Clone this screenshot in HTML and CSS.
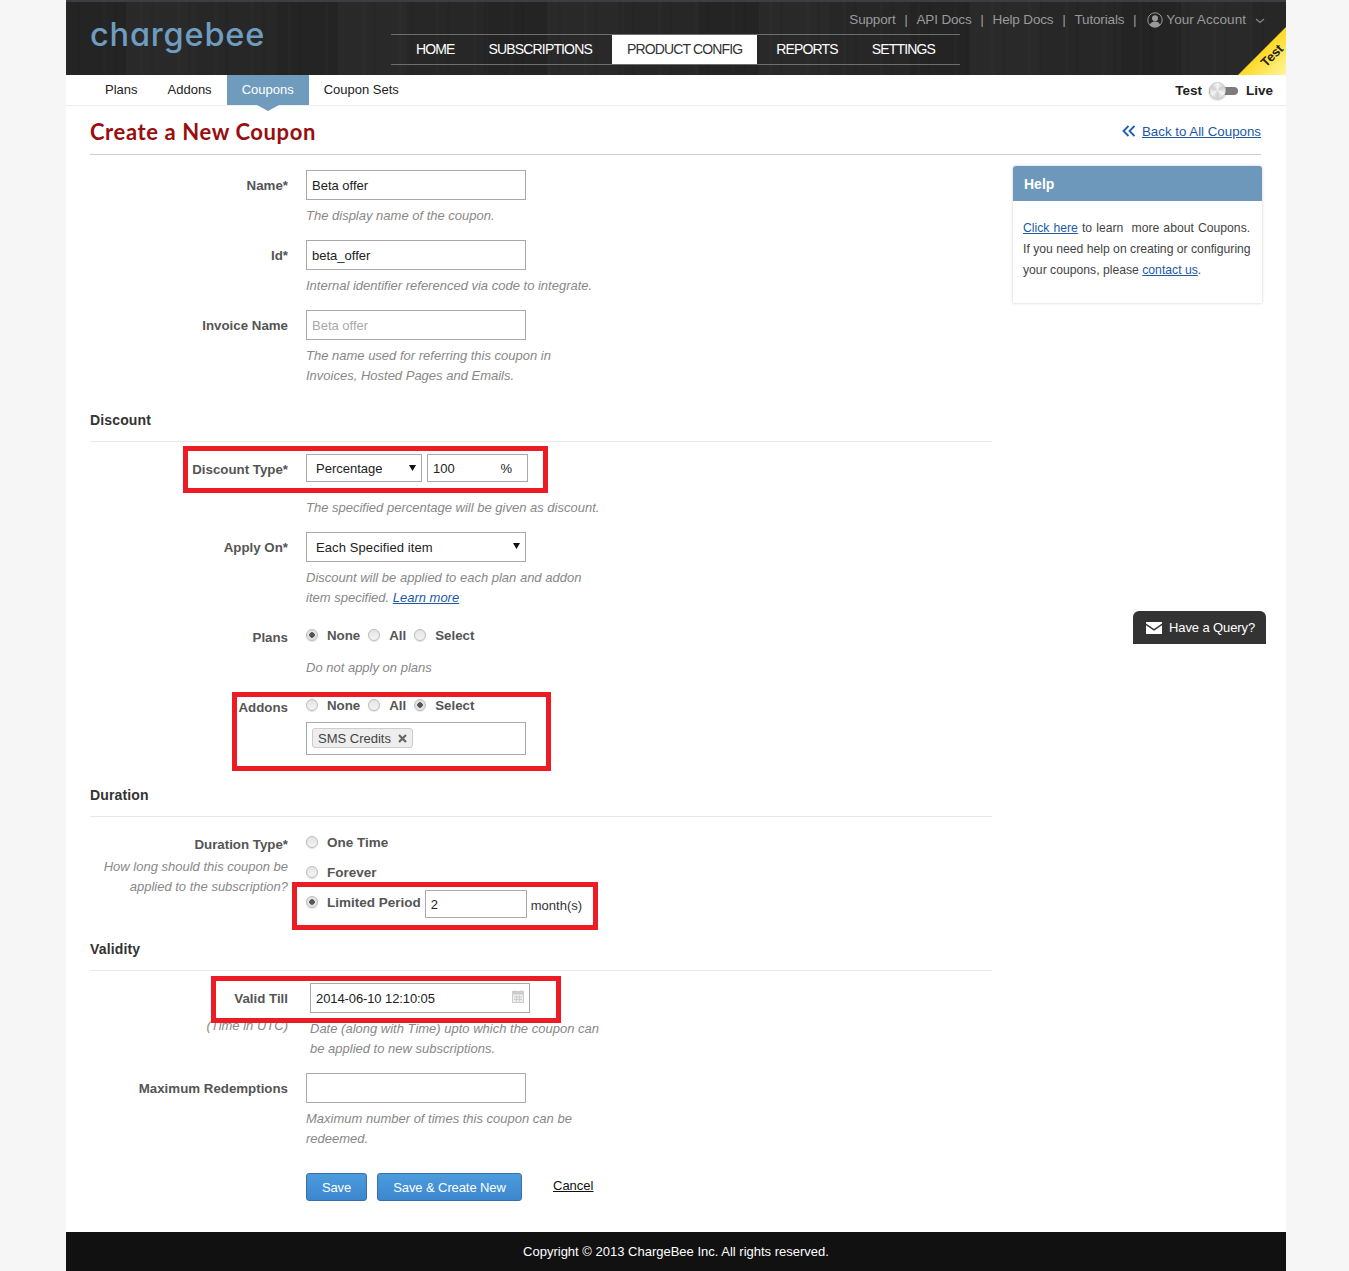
FILE: index.html
```html
<!DOCTYPE html>
<html lang="en">
<head>
<meta charset="utf-8">
<title>Create a New Coupon</title>
<link rel="stylesheet" href="styles.css">
</head>
<body>
<div class="page">
  <header class="header">
    <a class="logo">chargebee</a>
    <div class="header-right">
      <div class="utility">
        <a>Support</a><i>|</i><a>API Docs</a><i>|</i><a>Help Docs</a><i>|</i><a>Tutorials</a><i>|</i>
        <svg class="avatar" viewBox="0 0 16 16" width="16" height="16"><circle cx="8" cy="8" r="7.2" fill="none" stroke="#999" stroke-width="1"/><circle cx="8" cy="6.2" r="3" fill="#999"/><path d="M2.8 13c.8-2.6 2.8-3.6 5.2-3.6s4.400 1 5.200 3.600a7 7 0 0 1-10.400 0z" fill="#999"/></svg>
        <a class="account">Your Account</a>
        <svg class="chev" viewBox="0 0 10 6" width="10" height="6"><path d="M1 1l4 3.500L9 1" fill="none" stroke="#888" stroke-width="1.200"/></svg>
      </div>
      <nav class="nav">
        <a>HOME</a><a class="nav-subs">SUBSCRIPTIONS</a><a class="active">PRODUCT CONFIG</a><a>REPORTS</a><a>SETTINGS</a>
      </nav>
    </div>
    <div class="ribbon"><span>Test</span></div>
  </header>

  <div class="subnav">
    <div class="subnav-tabs">
      <a>Plans</a><a>Addons</a><a class="active">Coupons</a><a>Coupon Sets</a>
    </div>
    <div class="mode">
      <b>Test</b>
      <span class="toggle"><span class="knob"></span></span>
      <b>Live</b>
    </div>
  </div>

  <div class="title-row">
    <h1>Create a New Coupon</h1>
    <div class="back">
      <svg viewBox="0 0 14 12" width="14" height="12"><path d="M6.500 1L1.500 6l5 5M12.500 1l-5 5 5 5" fill="none" stroke="#1d5fa8" stroke-width="1.800"/></svg>
      <a>Back to All Coupons</a>
    </div>
  </div>

  <div class="content">
    <form class="form">
      <div class="row">
        <label class="label">Name*</label>
        <div class="field"><input class="input" type="text" value="Beta offer"><p class="hint">The display name of the coupon.</p></div>
      </div>
      <div class="row">
        <label class="label">Id*</label>
        <div class="field"><input class="input" type="text" value="beta_offer"><p class="hint">Internal identifier referenced via code to integrate.</p></div>
      </div>
      <div class="row">
        <label class="label">Invoice Name</label>
        <div class="field"><input class="input" type="text" placeholder="Beta offer"><p class="hint">The name used for referring this coupon in<br>Invoices, Hosted Pages and Emails.</p></div>
      </div>

      <h2 class="section section-first">Discount</h2>
      <div class="row">
        <label class="label">Discount Type*</label>
        <div class="field">
          <div class="inline">
            <div class="select select-short">Percentage<svg class="arrow" viewBox="0 0 7 7" width="7" height="7"><path d="M0 1h7L3.500 7z" fill="#111"/></svg></div>
            <div class="percent"><span>100</span><span>%</span></div>
          </div>
          <p class="hint">The specified percentage will be given as discount.</p>
        </div>
      </div>
      <div class="row">
        <label class="label">Apply On*</label>
        <div class="field">
          <div class="select">Each Specified item<svg class="arrow" viewBox="0 0 7 7" width="7" height="7"><path d="M0 1h7L3.500 7z" fill="#111"/></svg></div>
          <p class="hint">Discount will be applied to each plan and addon<br>item specified. <a class="link">Learn more</a></p>
        </div>
      </div>
      <div class="row row-radio row-plans">
        <label class="label">Plans</label>
        <div class="field">
          <div class="radios">
            <input type="radio" class="radio" name="plans" checked><span>None</span>
            <input type="radio" class="radio" name="plans"><span>All</span>
            <input type="radio" class="radio" name="plans"><span>Select</span>
          </div>
          <p class="hint hint-gap">Do not apply on plans</p>
        </div>
      </div>
      <div class="row row-radio">
        <label class="label">Addons</label>
        <div class="field">
          <div class="radios">
            <input type="radio" class="radio" name="addons"><span>None</span>
            <input type="radio" class="radio" name="addons"><span>All</span>
            <input type="radio" class="radio" name="addons" checked><span>Select</span>
          </div>
          <div class="tagbox"><span class="tag">SMS Credits<svg class="tag-x" viewBox="0 0 9 9" width="9" height="9"><path d="M1 1l7 7M8 1L1 8" stroke="#666" stroke-width="2.200" fill="none"/></svg></span></div>
        </div>
      </div>

      <h2 class="section section-duration">Duration</h2>
      <div class="row row-duration">
        <div class="label-stack">
          <label class="label">Duration Type*</label>
          <p class="hint hint-right">How long should this coupon be<br>applied to the subscription?</p>
        </div>
        <div class="field">
          <div class="choice"><input type="radio" class="radio" name="dur"><span>One Time</span></div>
          <div class="choice"><input type="radio" class="radio" name="dur"><span>Forever</span></div>
          <div class="choice"><input type="radio" class="radio" name="dur" checked><span>Limited Period</span><input class="input input-months" type="text" value="2"><em>month(s)</em></div>
        </div>
      </div>

      <h2 class="section section-validity">Validity</h2>
      <div class="row row-valid">
        <div>
          <label class="label">Valid Till</label>
          <p class="hint hint-right hint-utc">(Time in UTC)</p>
        </div>
        <div class="field field-valid">
          <div class="date">2014-06-10 12:10:05
            <svg class="cal" viewBox="0 0 12 13" width="12" height="13"><rect x=".5" y="1.500" width="11" height="11" fill="#eee" stroke="#ccc"/><rect x=".5" y="1.500" width="11" height="3" fill="#ccc"/><path d="M3 0v3M9 0v3M2 7h8M2 9.500h8M4.500 5.500v6M7.500 5.500v6" stroke="#ccc" fill="none"/></svg>
          </div>
          <p class="hint">Date (along with Time) upto which the coupon can<br>be applied to new subscriptions.</p>
        </div>
      </div>
      <div class="row">
        <label class="label">Maximum Redemptions</label>
        <div class="field"><input class="input" type="text"><p class="hint">Maximum number of times this coupon can be<br>redeemed.</p></div>
      </div>
      <div class="row row-actions">
        <span></span>
        <div class="actions">
          <button type="button" class="btn btn-save">Save</button>
          <button type="button" class="btn btn-new">Save &amp; Create New</button>
          <a class="cancel">Cancel</a>
        </div>
      </div>
    </form>

    <aside class="help">
      <h3>Help</h3>
      <p><span class="wide"><a class="link">Click here</a> to learn&nbsp; more about Coupons.</span><br>If you need help on creating or configuring<br>your coupons, please <a class="link">contact us</a>.</p>
    </aside>
  </div>

  <footer class="footer">Copyright © 2013 ChargeBee Inc. All rights reserved.</footer>

  <div class="mark mark-discount"></div>
  <div class="mark mark-addons"></div>
  <div class="mark mark-limited"></div>
  <div class="mark mark-valid"></div>

  <a class="query">
    <svg viewBox="0 0 16 12" width="16" height="12"><path d="M0 0h16v1.500L8 7 0 1.500z" fill="#fff"/><path d="M0 3.200L8 8.700l8-5.500V12H0z" fill="#fff"/></svg>
    Have a Query?
  </a>
</div>
</body>
</html>
```

FILE: styles.css
```css
* { box-sizing: border-box; }
html, body { margin: 0; padding: 0; }
body {
  background: #f6f6f6;
  font-family: "Liberation Sans", Arial, sans-serif;
  font-size: 13px;
  color: #333;
}
p, h1, h2, h3 { margin: 0; }

.page {
  position: relative;
  width: 1220px;
  height: 1271px;
  margin-left: 66px;
  background: #fff;
  display: flex;
  flex-direction: column;
}

/* header */
.header {
  position: relative;
  height: 75px;
  flex: none;
  display: flex;
  padding-left: 24px;
  border-top: 2px solid #3e3c44;
  background-color: #272728;
  background-image:
    repeating-linear-gradient(90deg, rgba(255,255,255,.012) 0 3px, transparent 3px 11px, rgba(0,0,0,.05) 11px 14px, transparent 14px 37px),
    repeating-linear-gradient(90deg, rgba(0,0,0,.08) 0 60px, rgba(255,255,255,.012) 60px 130px, transparent 130px 211px);
  overflow: hidden;
}
.logo {
  width: 301px;
  flex: none;
  font-family: Inter, sans-serif;
  font-feature-settings: "cv11" 1;
  font-size: 32.500px;
  font-weight: 500;
  line-height: 42px;
  padding-top: 12px;
  letter-spacing: .8px;
  color: #6f9dc0;
}
.header-right {
  width: 895px;
  flex: none;
}
.utility {
  height: 32px;
  display: flex;
  align-items: center;
  justify-content: flex-end;
  padding-top: 3px;
  padding-right: 21px;
  font-size: 13.500px;
  letter-spacing: -.15px;
  color: #9a9a9a;
}
.utility i {
  font-style: normal;
  margin: 0 9px;
  color: #aaa;
  font-size: 12px;
}
.utility .avatar { margin: 0 3px 0 2px; }
.utility .account { letter-spacing: .05px; }
.utility .chev { margin-left: 9px; margin-top: 3px; }
.nav {
  width: 569px;
  height: 31px;
  display: flex;
  padding-left: 10px;
  border-top: 1px solid #6e6e6e;
  border-bottom: 1px solid #6e6e6e;
}
.nav a {
  padding: 0 15px;
  margin-right: 4px;
  line-height: 29px;
  color: #fff;
  font-size: 14px;
  letter-spacing: -.85px;
  white-space: nowrap;
}
.nav a.nav-subs { margin-right: 5px; }
.nav a.active {
  background: #fff;
  color: #333;
}
.ribbon {
  position: absolute;
  right: 0;
  bottom: 0;
  width: 48px;
  height: 48px;
  clip-path: polygon(100% 0, 100% 100%, 0 100%);
  background: linear-gradient(135deg, #ffd921 50%, #fff6a0 100%);
}
.ribbon span {
  position: absolute;
  right: 1px;
  bottom: 12px;
  font-weight: bold;
  font-size: 13px;
  color: #222;
  transform: rotate(-45deg);
}

/* sub nav */
.subnav {
  position: relative;
  height: 31px;
  flex: none;
  display: flex;
  justify-content: space-between;
  padding: 0 13px 0 24px;
  border-bottom: 1px solid #eee;
}
.subnav-tabs { display: flex; }
.subnav-tabs a {
  position: relative;
  height: 30px;
  padding: 0 15px;
  line-height: 30px;
  font-size: 13px;
  color: #222;
}
.subnav-tabs a.active {
  background: #6f9bbd;
  color: #fff;
}
.subnav-tabs a.active::after {
  content: "";
  position: absolute;
  left: 50%;
  top: 30px;
  margin-left: -11px;
  border: 11px solid transparent;
  border-top: 6px solid #6f9bbd;
  border-bottom: 0;
}
.mode {
  display: flex;
  align-items: center;
  gap: 7px;
  font-size: 13.500px;
  color: #222;
}
.toggle {
  position: relative;
  width: 29px;
  height: 8px;
  margin: 2px 1px 0 0;
  border-radius: 4px;
  background: #7c7c7c;
}
.knob {
  position: absolute;
  left: 0;
  top: -5px;
  width: 17px;
  height: 17px;
  border-radius: 50%;
  background: conic-gradient(#f6f6f6, #cfcfcf, #f6f6f6, #cfcfcf, #f6f6f6, #cfcfcf, #f6f6f6);
  border: 1px solid #ccc;
  box-shadow: 0 1px 2px rgba(0,0,0,.3);
}

/* title */
.title-row {
  flex: none;
  height: 49px;
  margin: 0 25px 0 24px;
  padding-top: 2px;
  display: flex;
  justify-content: space-between;
  align-items: center;
  border-bottom: 1px solid #ccc;
}
h1 {
  font-family: Lato, sans-serif;
  font-size: 22px;
  font-weight: 700;
  color: #990e0e;
  letter-spacing: .6px;
}
.back {
  display: flex;
  align-items: center;
  gap: 6px;
  font-size: 13.300px;
}
.back a, .link {
  color: #1d5aa3;
  text-decoration: underline;
}

/* body */
.content {
  flex: 1;
  display: flex;
  gap: 21px;
  padding-left: 24px;
}
.form {
  width: 902px;
  flex: none;
  padding-top: 15px;
}
.row {
  display: grid;
  grid-template-columns: 198px 1fr;
  column-gap: 18px;
  margin-bottom: 14px;
}
.label {
  display: block;
  text-align: right;
  font-weight: bold;
  font-size: 13.300px;
  line-height: 32px;
  color: #555;
}
.input {
  display: block;
  width: 220px;
  height: 30px;
  padding: 0 5px;
  border: 1px solid #aaa;
  border-radius: 0;
  background: #fff;
  font-family: "Liberation Sans", Arial, sans-serif;
  font-size: 13px;
  color: #222;
  outline: none;
}
.input::placeholder { color: #aaa; opacity: 1; }
.hint {
  margin-top: 6px;
  font-style: italic;
  font-size: 13px;
  line-height: 20px;
  color: #888;
}
.hint-gap { margin-top: 13px; }
.hint-right { text-align: right; margin-top: 0; }
.section {
  height: 32px;
  font-size: 14px;
  line-height: 20px;
  font-weight: bold;
  letter-spacing: .15px;
  color: #333;
  border-bottom: 1px solid #e8e8e8;
  margin-bottom: 12px;
}
.section-first { margin-top: 24px; }
.section-duration { margin-top: 30px; margin-bottom: 10px; }
.section-validity { margin-bottom: 12px; }
.inline { display: flex; gap: 5px; margin-bottom: 16px; }
.select {
  position: relative;
  width: 220px;
  height: 30px;
  padding-left: 9px;
  border: 1px solid #aaa;
  line-height: 29px;
  font-size: 13px;
  letter-spacing: .1px;
  color: #222;
}
.select-short { width: 116px; height: 28px; line-height: 27px; letter-spacing: 0; }
.arrow {
  position: absolute;
  right: 5px;
  top: 9px;
}
.percent {
  width: 101px;
  height: 28px;
  padding: 0 15px 0 5px;
  display: flex;
  justify-content: space-between;
  border: 1px solid #aaa;
  line-height: 27px;
  font-size: 13px;
  color: #222;
}
.radios {
  display: flex;
  align-items: center;
  height: 20px;
}
.radios span, .choice span {
  font-weight: bold;
  font-size: 13.300px;
  color: #555;
  line-height: 20px;
  padding-top: 1px;
}
.choice span { font-size: 13.500px; }
.radio {
  appearance: none;
  -webkit-appearance: none;
  width: 12px;
  height: 12px;
  margin: 0;
  flex: none;
  border-radius: 50%;
  border: 1px solid #bbb;
  background: linear-gradient(#e4e4e4, #f4f4f4);
  box-shadow: 0 1px 1px rgba(0,0,0,.12);
}
.radio:checked {
  background: radial-gradient(circle, #555 0 2.500px, #e4e4e4 3px);
}
.radios .radio { margin-right: 9px; }
.radios span { margin-right: 8px; }
.row-radio { margin-bottom: 10px; }
.row-plans { margin-top: 17px; }
.row-radio .label { line-height: 20px; padding-top: 3px; }
.row-radio .hint-gap { margin-bottom: 7px; }
.tagbox {
  width: 220px;
  height: 33px;
  margin-top: 7px;
  padding: 5px 5px;
  border: 1px solid #aaa;
}
.tag {
  display: inline-flex;
  align-items: center;
  gap: 7px;
  height: 20px;
  padding: 0 5px;
  border: 1px solid #ccc;
  border-radius: 3px;
  background: #eee;
  font-size: 13px;
  color: #444;
}
.row-duration { margin-bottom: 22px; }
.label-stack { padding-top: 6px; }
.row-duration .label { line-height: 24px; }
.label-stack .hint { margin-top: 0; }
.choice {
  display: flex;
  align-items: center;
  height: 30px;
}
.choice .radio { margin-right: 9px; }
.input-months {
  width: 102px;
  height: 28px;
  margin-left: 4px;
  margin-top: 4px;
}
.choice em {
  font-style: normal;
  font-size: 13px;
  color: #333;
  margin: 6px 0 0 4px;
}
.row-valid .hint-utc { margin-top: 1px; }
.field-valid { padding-left: 4px; }
.date {
  position: relative;
  width: 220px;
  height: 30px;
  padding-left: 5px;
  border: 1px solid #aaa;
  line-height: 29px;
  font-size: 13px;
  letter-spacing: -.1px;
  color: #222;
}
.cal {
  position: absolute;
  right: 5px;
  top: 6px;
}
.row-actions { margin: 24px 0 0; }
.actions {
  display: flex;
  align-items: flex-start;
}
.btn {
  height: 28px;
  border: 1px solid #3a6ea8;
  border-radius: 3px;
  background: linear-gradient(#4b9cdd, #3d86cf);
  color: #fff;
  font-family: "Liberation Sans", Arial, sans-serif;
  font-size: 13px;
  letter-spacing: -.1px;
  padding: 0;
}
.btn-save { width: 61px; margin-right: 10px; }
.btn-new { width: 145px; margin-right: 31px; }
.cancel {
  color: #111;
  text-decoration: underline;
  font-size: 13px;
  line-height: 25px;
}

/* help */
.help {
  width: 249px;
  height: 137px;
  margin-top: 11px;
  border-radius: 3px 3px 0 0;
  background: #fff;
  box-shadow: 0 0 3px rgba(0,0,0,.22);
}
.help h3 {
  height: 35px;
  padding-left: 11px;
  border-radius: 3px 3px 0 0;
  background: #6d98bb;
  color: #fff;
  font-size: 14px;
  line-height: 36px;
}
.help p {
  padding: 17px 10px 0;
  font-size: 12.200px;
  line-height: 21px;
  color: #444;
  white-space: nowrap;
}
.help .wide { word-spacing: .7px; }

/* footer */
.footer {
  flex: none;
  height: 39px;
  background: #111;
  color: #fff;
  text-align: center;
  line-height: 39px;
  font-size: 13px;
}

/* annotations over the content */
.mark {
  position: absolute;
  border: 5px solid #ed1c24;
  pointer-events: none;
}
.mark-discount { left: 117px; top: 446px; width: 365px; height: 47px; }
.mark-addons { left: 166px; top: 692px; width: 319px; height: 79px; }
.mark-limited { left: 226px; top: 882px; width: 306px; height: 48px; }
.mark-valid { left: 145px; top: 976px; width: 350px; height: 47px; }

.query {
  position: absolute;
  left: 1067px;
  top: 611px;
  width: 133px;
  height: 33px;
  display: flex;
  align-items: center;
  gap: 7px;
  padding-left: 13px;
  border-radius: 6px 6px 0 0;
  background: #333;
  color: #fff;
  font-size: 13px;
  letter-spacing: -.1px;
}
```
